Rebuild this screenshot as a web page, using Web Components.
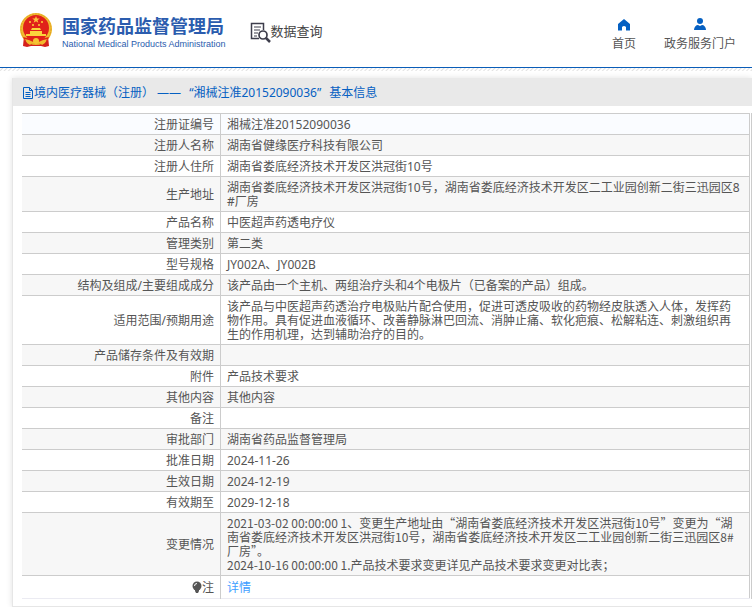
<!DOCTYPE html>
<html lang="zh-CN">
<head>
<meta charset="utf-8">
<title>数据查询</title>
<style>
  html {
    overflow: hidden;
  }

  body {
    margin: 0;
    background-color: #fff;
    color: #555;
    font: 12px/14px "Noto Sans", "Noto Sans CJK SC", sans-serif;
  }
</style>
</head>
<body>
<site-header>
  <nav-link slot="nav" icon="home">首页</nav-link>
  <nav-link slot="nav" icon="user">政务服务门户</nav-link>
</site-header>
<detail-panel></detail-panel>

<script>
class SiteHeader extends HTMLElement {
  constructor() {
    super();
    this.attachShadow({ mode: 'open' });
    this.render();
  }

  render() {
    this.shadowRoot.innerHTML = `
      <style>
        ${siteHeaderStyles}
      </style>
      <header>
        <a class="brand" href="#">
          <svg width="34" height="36" viewBox="0 0 34 36">
            <path d="M5 24 L4 34 L8 35 L12 34 L22 34 L26 35 L30 34 L29 24 Z" fill="#d5201c"/>
            <circle cx="17" cy="17" r="16" fill="#f1bc30"/>
            <circle cx="17" cy="17" r="15" fill="none" stroke="#dfa026" stroke-dasharray="2 1"/>
            <circle cx="17" cy="16" r="13" fill="#e0211a"/>
            <path d="M17 4l1 2.500h2.700l-2.200 1.700.8 2.600-2.300-1.500-2.300 1.500.8-2.600-2.200-1.700h2.700z" fill="#fbc43c"/>
            <path d="M10 9h2v2h-2zM22 9h2v2h-2zM13 12h2v2h-2zM19 12h2v2h-2z" fill="#f6a52f"/>
            <path d="M12 18l1-2h8l1 2zM11 19h12v3H11zM7 22h20v2H7z" fill="#fbd43c"/>
            <path d="M4 25 Q17 29 30 25 L28 29 Q17 31 6 29 Z" fill="#e0211a"/>
            <path d="M6 27 Q11 28 14 30 L11 33 L8 31 Z M28 27 Q23 28 20 30 L23 33 L26 31 Z" fill="#f2b92d"/>
            <circle cx="17" cy="29" r="3" fill="#f6c433"/>
          </svg>
          <span class="names">
            <strong>国家药品监督管理局</strong>
            <small>National Medical Products Administration</small>
          </span>
        </a>
        <div class="section">
          <svg width="21" height="21" viewBox="0 0 21 21" fill="none" stroke="#3d3d4b">
            <path d="M9 16.500H1.500V1.500h12V8" stroke-width="1.500"/>
            <path d="M4 5h7M4 8h6M4 11h4M4 14h3"/>
            <circle cx="13" cy="13" r="4" stroke-width="1.700"/>
            <path d="M16 16l4 4" stroke-width="2.500"/>
          </svg>
          <span>数据查询</span>
        </div>
        <nav><slot name="nav"></slot></nav>
      </header>
      <div class="hatch"></div>
    `;
  }
}

const siteHeaderStyles = `
  :host {
    display: block;
  }

  header {
    display: flex;
    box-sizing: border-box;
    height: 68px;
    padding: 0 16px 0 19px;
    border-bottom: 1px solid #0a5db8;
  }

  .brand {
    display: flex;
    gap: 9px;
    padding-top: 12px;
    color: #2b5cae;
    text-decoration: none;
  }

  .names {
    display: flex;
    flex-direction: column;
    padding-top: 2px;
  }

  strong {
    font-size: 18px;
    line-height: 24px;
  }

  small {
    font: 9px/12px "Liberation Sans", sans-serif;
  }

  .section {
    display: flex;
    align-items: flex-start;
    padding: 22px 0 0 24px;
    color: #444;
    font-size: 13px;
    line-height: 18px;
  }

  nav {
    display: flex;
    gap: 28px;
    margin-left: auto;
    padding-top: 18px;
  }

  .hatch {
    height: 3px;
    background: repeating-linear-gradient(135deg, #fff 0 1px, #e2e2e2 2px, #fff 3px);
  }
`;

class NavLink extends HTMLElement {
  constructor() {
    super();
    this.attachShadow({ mode: 'open' });
  }

  connectedCallback() {
    const icons = {
      home: '<path d="M7 1l6 5v6.500H9V9Q7 7 5 9v3.500H1V6z"/>',
      user: '<circle cx="7" cy="3" r="3"/><path d="M1 12c0-3 2-5 4-5l2 1 2-1c2 0 4 2 4 5z"/>',
    };
    this.shadowRoot.innerHTML = `
      <style>
        a {
          display: flex;
          flex-direction: column;
          align-items: center;
          gap: 3px;
          color: #555;
          line-height: 18px;
          text-decoration: none;
        }
      </style>
      <a href="#">
        <svg width="14" height="14" viewBox="0 0 14 14" fill="#0560c2">${icons[this.getAttribute('icon')]}</svg>
        <span><slot></slot></span>
      </a>
    `;
  }
}

const rows = [
  ['注册证编号', '湘械注准20152090036'],
  ['注册人名称', '湖南省健缘医疗科技有限公司'],
  ['注册人住所', '湖南省娄底经济技术开发区洪冠街10号'],
  ['生产地址', '湖南省娄底经济技术开发区洪冠街10号，湖南省娄底经济技术开发区二工业园创新二街三迅园区8<wbr>#厂房'],
  ['产品名称', '中医超声药透电疗仪'],
  ['管理类别', '第二类'],
  ['型号规格', 'JY002A、JY002B'],
  ['结构及组成/主要组成成分', '该产品由一个主机、两组治疗头和4个电极片（已备案的产品）组成。'],
  ['适用范围/预期用途', '该产品与中医超声药透治疗电极贴片配合使用，促进可透皮吸收的药物经皮肤透入人体，发挥药物作用。具有促进血液循环、改善静脉淋巴回流、消肿止痛、软化疤痕、松解粘连、刺激组织再生的作用机理，达到辅助治疗的目的。'],
  ['产品储存条件及有效期', ''],
  ['附件', '产品技术要求'],
  ['其他内容', '其他内容'],
  ['备注', ''],
  ['审批部门', '湖南省药品监督管理局'],
  ['批准日期', '2024-11-26'],
  ['生效日期', '2024-12-19'],
  ['有效期至', '2029-12-18'],
  ['变更情况', '2021-03-02 00:00:00 1、变更生产地址由“湖南省娄底经济技术开发区洪冠街10号”变更为“湖南省娄底经济技术开发区洪冠街10号，湖南省娄底经济技术开发区二工业园创新二街三迅园区8#厂房”。<br>2024-10-16 00:00:00 1.产品技术要求变更详见产品技术要求变更对比表；'],
];

class DetailPanel extends HTMLElement {
  constructor() {
    super();
    this.attachShadow({ mode: 'open' });
    this.render();
  }

  render() {
    this.shadowRoot.innerHTML = `
      <style>
        ${detailPanelStyles}
      </style>
      <section>
        <h1>
          <svg width="12" height="12" viewBox="0 0 12 12" fill="none" stroke="#0560c2">
            <path d="M1.500.5h6l3 3v8h-9zM7.500.5v3h3M3.500 5.500h5M3.500 7.500h5M3.500 9.500h5"/>
          </svg>
          <span>境内医疗器械（注册） ——<span class="open">“</span>湘械注准20152090036<span class="close">”</span>基本信息</span>
        </h1>
        <div class="content">
          <table>
            <tbody>
              ${rows.map(([label, value]) => `
                <tr>
                  <th scope="row">${label}</th>
                  <td class="${value.includes('“') ? 'quoted' : ''}">${value}</td>
                </tr>
              `).join('')}
              <tr class="note">
                <th scope="row">
                  <svg width="10" height="12" viewBox="0 0 10 12" fill="#555">
                    <circle cx="5" cy="5" r="4.500"/>
                    <path d="M3 8h4v2L6 12H4L3 10z"/>
                    <path d="M2.500 5a2.500 2.500 0 0 1 2.500-2.500" fill="none" stroke="#fff"/>
                  </svg>注
                </th>
                <td><a href="#">详情</a></td>
              </tr>
            </tbody>
          </table>
        </div>
      </section>
    `;
  }
}

const detailPanelStyles = `
  :host {
    display: block;
    padding: 7px 0 0 12px;
  }

  section {
    border: 1px solid #e6e6e6;
    border-width: 0 0 1px 1px;
    box-shadow: 0 0 6px rgba(0, 0, 0, 0.12);
  }

  h1 {
    display: flex;
    align-items: center;
    box-sizing: border-box;
    height: 28px;
    margin: 0;
    padding: 2px 0 0 9px;
    background-color: #e9e9e9;
    color: #0560c2;
    font-size: 12px;
    font-weight: normal;
  }

  .open {
    padding-left: 8px;
  }

  .close {
    padding-right: 8px;
  }

  .content {
    margin: 7px 0;
    padding: 0 1px 0 9px;
    border-right: 1px solid #ccc;
  }

  table {
    width: 100%;
    border-collapse: collapse;
    table-layout: fixed;
    border-right: 1px solid #ccc;
    border-bottom: 1px solid #ebebf2;
  }

  th,
  td {
    height: 14px;
    padding: 4px 8px 2px 6px;
    border-top: 1px solid #ccc;
  }

  th {
    width: 186px;
    padding-right: 6px;
    border-right: 1px solid #ccc;
    font-weight: normal;
    text-align: right;
  }

  /* curly quotes are full width in the CJK font */
  .quoted {
    padding-top: 3px;
    padding-bottom: 3px;
    font-family: "Noto Sans CJK SC", sans-serif;
  }

  tr:nth-child(even) {
    background-color: #f7f7f7;
  }

  tr:first-child {
    background-color: #fafcff;
  }

  tr.note {
    background-color: #fff;
  }

  .note th,
  .note td {
    height: 16px;
  }

  .note svg {
    vertical-align: -1px;
  }

  a {
    color: #409eff;
    text-decoration: none;
  }
`;

customElements.define('site-header', SiteHeader);
customElements.define('nav-link', NavLink);
customElements.define('detail-panel', DetailPanel);
</script>
</body>
</html>
